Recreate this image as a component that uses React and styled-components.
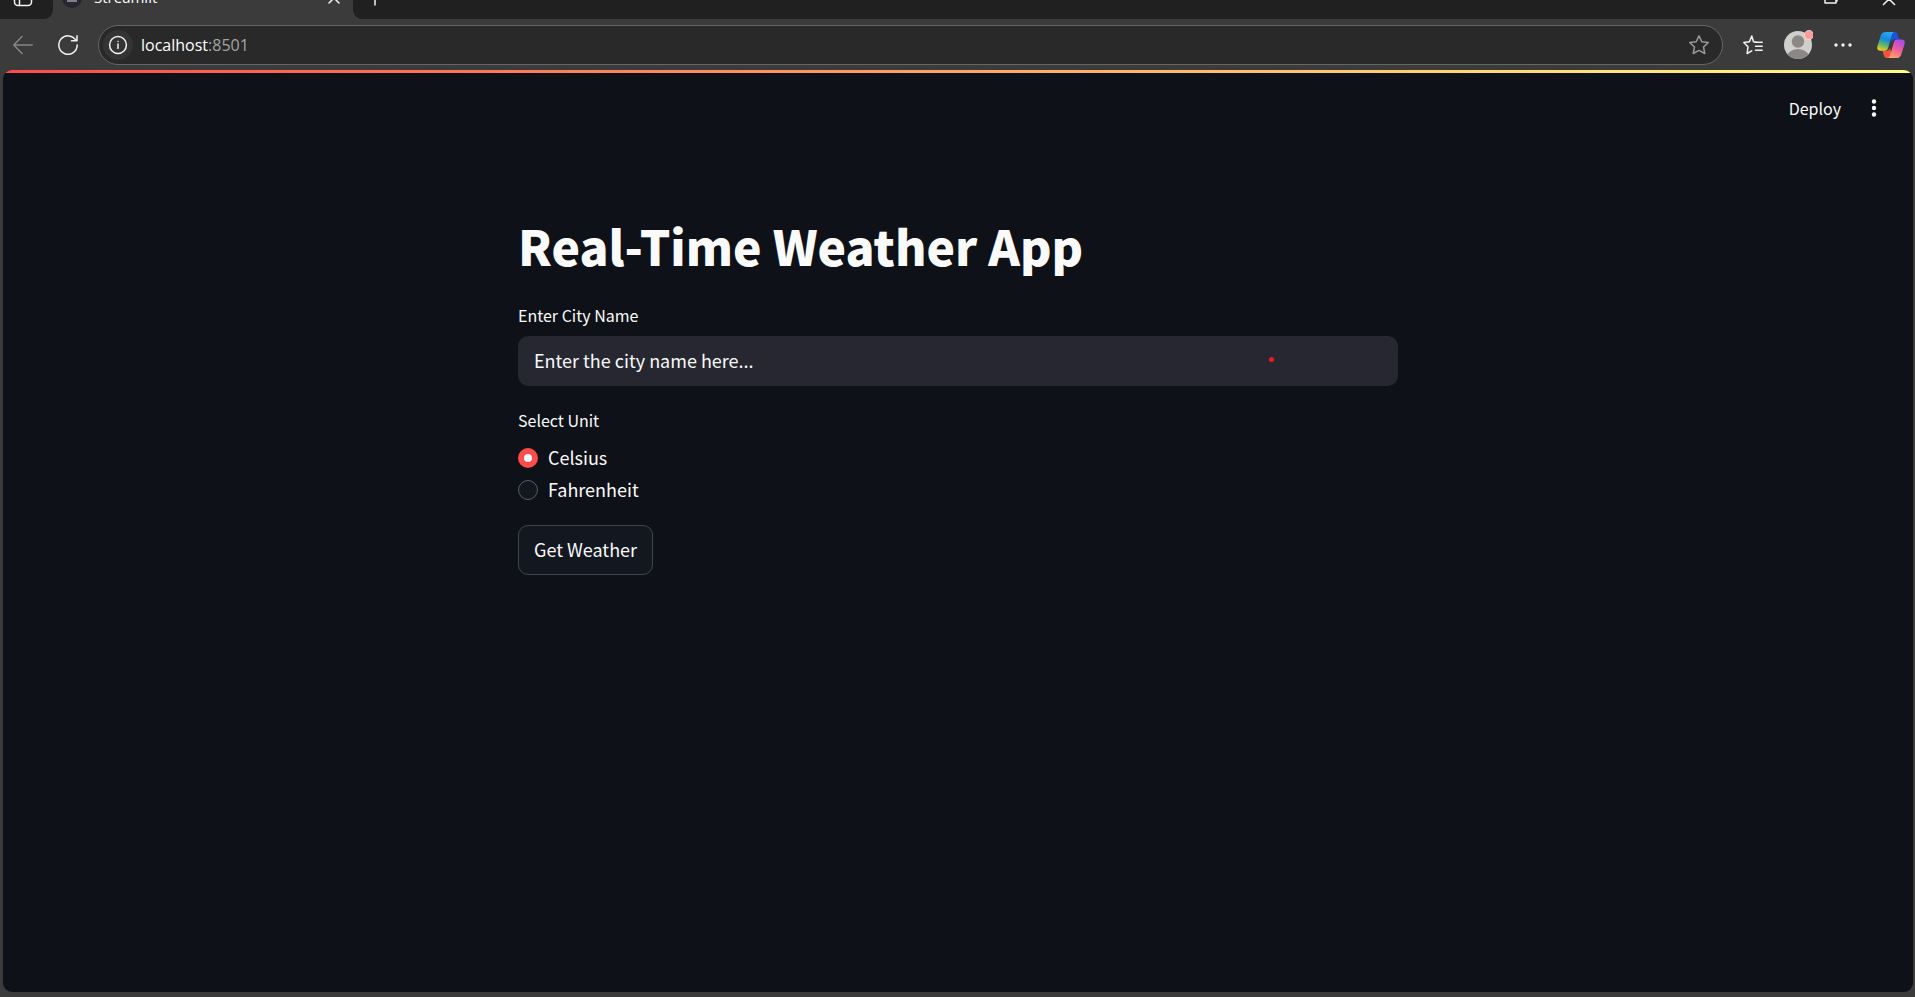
import React, { useState } from "react";
import styled, { createGlobalStyle } from "styled-components";

const GlobalStyle = createGlobalStyle`
  *, *::before, *::after { box-sizing: border-box; }
  body {
    margin: 0;
    background: #3b3b3b;
    color: #fafafa;
    font-family: "Noto Sans CJK SC", "Noto Sans", sans-serif;
  }
  button, input { font: inherit; color: inherit; }
  button { background: none; border: 0; padding: 0; cursor: pointer; }
  svg { display: block; }
`;

const Window = styled.div`
  display: flex;
  flex-direction: column;
  min-height: 100vh;
  background: #3b3b3b;
`;

const TabStrip = styled.header`
  display: flex;
  height: 19px;
  overflow: hidden;
`;

const StripEnd = styled.div`
  display: flex;
  align-items: flex-end;
  flex: ${(p) => (p.$grow ? 1 : "none")};
  justify-content: ${(p) => (p.$grow ? "space-between" : "flex-start")};
  background: #202020;
  border-radius: ${(p) => (p.$grow ? "0 0 0 9px" : "0 0 9px 0")};
  padding: ${(p) => (p.$grow ? "0 19px 0 13px" : "0 20px 0 13px")};
`;

const Tab = styled.div`
  display: flex;
  align-items: flex-end;
  width: 300px;
  padding: 0 9px 0 9px;
`;

const TabTitle = styled.span`
  flex: 1;
  margin: 0 0 12px 12px;
  font: 15px/20px "Open Sans", sans-serif;
  color: #fff;
`;

const WindowControls = styled.div`
  display: flex;
  gap: 40px;
`;

const StripButton = styled.button`
  display: flex;
  align-items: center;
  height: 42px;
`;

const Toolbar = styled.nav`
  display: flex;
  align-items: center;
  height: 51px;
  padding: 0 6px 0 8px;
`;

const IconButton = styled.button`
  display: flex;
  align-items: center;
  justify-content: center;
  flex: none;
  width: ${(p) => p.$width || 30}px;
  height: 30px;
  border-radius: 15px;
  background: ${(p) => p.$fill || "none"};
`;

const NavButtons = styled.div`
  display: flex;
  gap: 15px;
  margin-right: 15px;
`;

const AddressBar = styled.div`
  display: flex;
  align-items: center;
  flex: 1;
  height: 40px;
  padding: 0 8px 0 4px;
  border: 1px solid #666;
  border-radius: 20px;
  background: #292929;
`;

const Url = styled.span`
  flex: 1;
  margin-left: 8px;
  font: 16px/24px "Open Sans", sans-serif;
  color: #fff;
`;

const Port = styled.span`
  color: #a5a5a5;
`;

const ToolbarActions = styled.div`
  display: flex;
  gap: 15px;
  margin-left: 15px;
`;

const Page = styled.div`
  flex: 1;
  margin: 0 2px 5px 3px;
  border-radius: 9px;
  overflow: hidden;
  background: #0e1117;
`;

const Decoration = styled.div`
  height: 3px;
  background: linear-gradient(90deg, #ff4b4b, #fffd80);
`;

const AppHeader = styled.div`
  display: flex;
  align-items: center;
  justify-content: flex-end;
  gap: 18px;
  height: 69px;
  padding-right: 24px;
`;

const DeployButton = styled.button`
  font-size: 16px;
  line-height: 24px;
`;

const Content = styled.main`
  max-width: 880px;
  margin: 0 auto;
  padding-top: 70px;
`;

const Title = styled.h1`
  margin: 0;
  font-size: 48px;
  line-height: 66px;
  font-weight: 900;
`;

const Form = styled.form`
  display: flex;
  flex-direction: column;
  align-items: flex-start;
  padding-top: 25px;
`;

const labelText = `
  display: block;
  padding: 0;
  font-size: 16px;
  line-height: 24px;
`;

const FieldLabel = styled.label`
  ${labelText}
`;

const InputWrap = styled.div`
  position: relative;
  width: 100%;
  margin: 9px 0 22px;
`;

const CityInput = styled.input`
  display: block;
  width: 100%;
  height: 50px;
  padding: 0 16px 3px;
  border: 0;
  border-radius: 10px;
  outline: 0;
  background: #262730;
  font-size: 18px;
`;

const Pointer = styled.span`
  position: absolute;
  top: 21px;
  left: 85%;
  width: 5px;
  height: 5px;
  margin-left: 3px;
  border-radius: 50%;
  background: #ea1c1c;
`;

const UnitGroup = styled.fieldset`
  margin: 0 0 19px;
  padding: 0;
  border: 0;
`;

const UnitLegend = styled.legend`
  ${labelText}
  margin-bottom: 10px;
`;

const UnitOption = styled.label`
  display: flex;
  align-items: center;
  gap: 10px;
  height: 32px;
`;

const UnitName = styled.span`
  padding-bottom: 2px;
  font-size: 18px;
  line-height: 30px;
`;

const Radio = styled.input`
  appearance: none;
  width: 20px;
  height: 20px;
  margin: 0;
  border: 1px solid #5c5d63;
  border-radius: 50%;
  background: #131720;
  &:checked {
    border: 6px solid #ff4b4b;
    background: #fafafa;
  }
`;

const SubmitButton = styled.button`
  height: 50px;
  padding: 0 15px 3px;
  border: 1px solid #41444c;
  border-radius: 10px;
  background: #131720;
  font-size: 18px;
`;

const Line = ({ size = 20, color = "#f2f2f2", width = 1.5, children }) => (
  <svg width={size} height={size} viewBox="0 0 20 20" fill="none" stroke={color}
    strokeWidth={width} strokeLinecap="round" strokeLinejoin="round" aria-hidden="true">
    {children}
  </svg>
);

const Avatar = () => (
  <svg width="30" height="30" viewBox="0 0 30 30" aria-hidden="true">
    <defs><clipPath id="face"><circle cx="15" cy="15" r="14" /></clipPath></defs>
    <circle cx="15" cy="15" r="14" fill="#d0cfcc" />
    <g clipPath="url(#face)" fill="#8b8784">
      <circle cx="15" cy="11.5" r="6.2" />
      <ellipse cx="15" cy="28" rx="11.5" ry="9" />
    </g>
    <circle cx="26" cy="5" r="4.6" fill="#ff9c98" stroke="#eee1dd" strokeWidth="0.8" />
  </svg>
);

const Copilot = () => (
  <svg width="28" height="26" viewBox="0 0 28 26" aria-hidden="true">
    <defs>
      <linearGradient id="cool" x1="0.6" y1="0" x2="0.3" y2="1">
        <stop offset="0" stopColor="#26a9f2" />
        <stop offset="0.4" stopColor="#168bd8" />
        <stop offset="0.7" stopColor="#5cb66c" />
        <stop offset="1" stopColor="#f2cd16" />
      </linearGradient>
      <linearGradient id="warm" x1="0.7" y1="0" x2="0.3" y2="1">
        <stop offset="0" stopColor="#a64cf0" />
        <stop offset="0.5" stopColor="#ee5b9c" />
        <stop offset="1" stopColor="#ffa565" />
      </linearGradient>
    </defs>
    <path d="M14 0h3.5c2 0 2.8 1.2 3.3 3l1.2 4.5h-4c-2 0-3 1-3.5 3L13 4Z" fill="#1d52d8" />
    <path d="M13.5 26H10c-2 0-2.8-1.2-3.3-3l-1.2-4.2h4c2 0 3-1 3.5-3l1.5 6Z" fill="#f4563b" />
    <path d="M9 0h9c-2 0-2.8 1.5-3.4 3.6L11.2 15.8c-.6 2-1.5 3-3.4 3H3.5C.8 18.8-.3 17 .4 14.2L3.8 3.6C4.6 1.2 6 0 9 0Z" fill="url(#cool)" />
    <path d="M19 26h-9c2 0 2.8-1.5 3.4-3.6l3.4-12c.6-2 1.5-3 3.4-3h4.3c2.7 0 3.8 1.8 3.1 4.6l-3.4 10.4C23.4 24.8 22 26 19 26Z" fill="url(#warm)" />
  </svg>
);

const STAR = "M10 .9l2.8 5.9 6.4.8-4.7 4.4 1.3 6.5L10 15.4l-5.8 3.1 1.3-6.5L.8 7.6l6.4-.8Z";

function BrowserChrome() {
  return (
    <>
      <TabStrip>
        <StripEnd>
          <StripButton aria-label="Tab actions">
            <Line><rect x="1.5" y="1" width="17" height="16.5" rx="3.5" /><path d="M6.5 6v11M1.5 6h17" /></Line>
          </StripButton>
        </StripEnd>
        <Tab>
          <StripButton as="span">
            <svg width="20" height="20" viewBox="0 0 20 20" aria-hidden="true">
              <circle cx="10" cy="10" r="10" fill="#262730" />
              <path d="M5 13h10" stroke="#a0a0a4" strokeWidth="1.5" />
            </svg>
          </StripButton>
          <TabTitle>Streamlit</TabTitle>
          <StripButton aria-label="Close tab">
            <Line><path d="M5 5l10 10M15 5L5 15" /></Line>
          </StripButton>
        </Tab>
        <StripEnd $grow>
          <StripButton aria-label="New tab">
            <Line><path d="M9 3v14M2 10h14" /></Line>
          </StripButton>
          <WindowControls>
            <StripButton aria-label="Restore">
              <Line><path d="M3 6h11v9H3ZM6 4h9v9" /></Line>
            </StripButton>
            <StripButton aria-label="Close window">
              <svg width="14" height="18" viewBox="0 0 14 18" stroke="#f2f2f2" strokeWidth="1.5" aria-hidden="true">
                <path d="M1 4l12 12M13 4L1 16" />
              </svg>
            </StripButton>
          </WindowControls>
        </StripEnd>
      </TabStrip>
      <Toolbar>
        <NavButtons>
          <IconButton aria-label="Back">
            <Line color="#858585"><path d="M.8 10h18.4M9 1.5L.8 10 9 18.5" /></Line>
          </IconButton>
          <IconButton aria-label="Reload">
            <Line><path d="M18 5.5A9.2 9.2 0 1 0 19.2 10M19 .8v5h-5.5" /></Line>
          </IconButton>
        </NavButtons>
        <AddressBar>
          <IconButton $fill="#343434" aria-label="Site information">
            <Line><circle cx="10" cy="10" r="8.4" /><path d="M10 9v4.5M10 6.5v.1" /></Line>
          </IconButton>
          <Url>localhost<Port>:8501</Port></Url>
          <IconButton aria-label="Add to favorites">
            <Line color="#999"><path d={STAR} /></Line>
          </IconButton>
        </AddressBar>
        <ToolbarActions>
          <IconButton aria-label="Favorites">
            <Line>
              <path d="M13.3 7.2l-2.8-.4L8.8 1 6.4 6.7.8 7.5l4.2 4.3-.9 6.7 4.6-2.6" />
              <path d="M12.500 7.200h6.700M12.500 11.200h6.700M12.500 15.200h6.700" />
            </Line>
          </IconButton>
          <IconButton aria-label="Profile"><Avatar /></IconButton>
          <IconButton aria-label="Settings and more">
            <svg width="18" height="4" viewBox="0 0 18 4" fill="#f2f2f2" aria-hidden="true">
              <circle cx="2" cy="2" r="1.7" /><circle cx="9" cy="2" r="1.7" /><circle cx="16" cy="2" r="1.7" />
            </svg>
          </IconButton>
          <IconButton $width={36} aria-label="Copilot"><Copilot /></IconButton>
        </ToolbarActions>
      </Toolbar>
    </>
  );
}

export default function App() {
  const [city, setCity] = useState("Enter the city name here...");
  const [unit, setUnit] = useState("Celsius");
  return (
    <Window>
      <GlobalStyle />
      <BrowserChrome />
      <Page>
        <Decoration />
        <AppHeader>
          <DeployButton>Deploy</DeployButton>
          <IconButton aria-label="Main menu">
            <svg width="6" height="18" viewBox="0 0 6 18" fill="#fafafa" aria-hidden="true">
              <circle cx="3" cy="2.5" r="2.2" /><circle cx="3" cy="9" r="2.2" /><circle cx="3" cy="15.5" r="2.2" />
            </svg>
          </IconButton>
        </AppHeader>
        <Content>
          <Title>Real-Time Weather App</Title>
          <Form onSubmit={(e) => e.preventDefault()}>
            <FieldLabel htmlFor="city">Enter City Name</FieldLabel>
            <InputWrap>
              <CityInput id="city" type="text" value={city} onChange={(e) => setCity(e.target.value)} />
              <Pointer />
            </InputWrap>
            <UnitGroup>
              <UnitLegend>Select Unit</UnitLegend>
              {["Celsius", "Fahrenheit"].map((name) => (
                <UnitOption key={name}>
                  <Radio type="radio" name="unit" checked={unit === name} onChange={() => setUnit(name)} />
                  <UnitName>{name}</UnitName>
                </UnitOption>
              ))}
            </UnitGroup>
            <SubmitButton type="submit">Get Weather</SubmitButton>
          </Form>
        </Content>
      </Page>
    </Window>
  );
}
